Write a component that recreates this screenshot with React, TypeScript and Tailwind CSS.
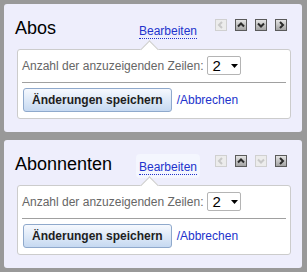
import React from "react";

function Chevron({ dir, off }: { dir: "left" | "up" | "down" | "right"; off?: boolean }) {
  const d = {
    left: "M7 3 L4 6 L7 9",
    right: "M5 3 L8 6 L5 9",
    up: "M3 7.5 L6 4.5 L9 7.5",
    down: "M3 4.5 L6 7.5 L9 4.5",
  }[dir];
  return (
    <svg width="12" height="12" viewBox="0 0 12 12" className="block">
      <path d={d} fill="none" stroke={off ? "#c8c8c8" : "#2a2a2a"} strokeWidth="2" />
    </svg>
  );
}

function NavButton({ dir, off }: { dir: "left" | "up" | "down" | "right"; off?: boolean }) {
  return (
    <div
      className={
        off
          ? "w-3 h-3 border border-[#d0d0d0] bg-[#ececec] flex items-center justify-center"
          : "w-3 h-3 border border-[#5a5a5a] bg-gradient-to-b from-[#e4e4e4] to-[#a4a4a4] flex items-center justify-center"
      }
    >
      <div className="-m-px">
        <Chevron dir={dir} off={off} />
      </div>
    </div>
  );
}

function Panel({ title, downOff, hot }: { title: string; downOff?: boolean; hot?: boolean }) {
  return (
    <div className="w-[298px] h-[128px] rounded-[3px] bg-[#eeeefc] pt-[14px] pl-[11px] pr-[11px]">
      <div className="flex items-start mb-[7px]">
        <div className="w-[124px] text-[18px] leading-[20px] text-black">{title}</div>
        <div className={hot ? "-ml-[3px] px-[3px] bg-[#f4f6fe] rounded-sm" : ""}>
          <span className="text-[12px] leading-[13px] text-[#2233cc] border-b border-dotted border-[#2233cc] inline-block">
            Bearbeiten
          </span>
        </div>
        <div className="flex-1" />
        <div className="flex gap-2 mt-px mr-[4px]">
          <NavButton dir="left" off />
          <NavButton dir="up" />
          <NavButton dir="down" off={downOff} />
          <NavButton dir="right" />
        </div>
      </div>
      <div className="relative ml-[2px] bg-white border border-[#cccccc] rounded-[3px] px-1 pt-[6px] pb-[6px]">
        <div className="absolute -top-[7px] left-[125px] w-[13px] h-[13px] rotate-45 bg-white border-l border-t border-[#cccccc]" />
        <div className="relative flex items-center gap-1">
          <span className="text-[12px] text-[#666666]">Anzahl der anzuzeigenden Zeilen:</span>
          <div className="w-[34px] h-[19px] border border-[#b4b4b4] rounded-[2px] bg-white flex items-center pl-1 text-[15px] leading-none text-black">
            <span>2</span>
            <svg width="7" height="4" viewBox="0 0 7 4" className="ml-[10px]">
              <path d="M0 0 H7 L3.5 4 Z" fill="#000" />
            </svg>
          </div>
        </div>
        <div className="h-px bg-[#a0a0a0] mt-[7px]" />
        <div className="flex items-center mt-[5px]">
          <button className="ml-px h-[24px] px-2 border border-[#8fa9cc] rounded-[3px] bg-gradient-to-b from-[#f6f9fe] to-[#c6d9f1] text-[12px] font-bold text-[#1e1e1e]">
            Änderungen speichern
          </button>
          <span className="ml-[5px] text-[12px] text-[#2233cc]">/Abbrechen</span>
        </div>
      </div>
    </div>
  );
}

export default function App() {
  return (
    <div
      className="w-[307px] h-[272px] bg-[#999999] pt-1 pl-1 flex flex-col gap-2"
      style={{ fontFamily: '"Liberation Sans", Arial, sans-serif' }}
    >
      <Panel title="Abos" />
      <Panel title="Abonnenten" downOff hot />
    </div>
  );
}
